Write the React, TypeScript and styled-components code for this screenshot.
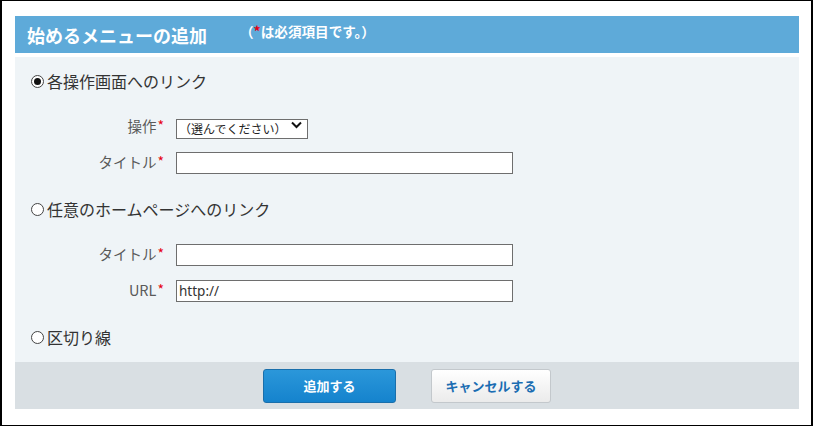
import styled, { createGlobalStyle, css } from "styled-components";

const GlobalStyle = createGlobalStyle`
  html, body {
    margin: 0px;
    padding: 0px;
    background: #ffffff;
  }
  body {
    font-family: "Noto Sans CJK JP", "Noto Sans", sans-serif;
    color: #333333;
  }
`;

const Frame = styled.div`${() => css`
  width: 813px;
  height: 426px;
  box-sizing: border-box;
  border-style: solid;
  border-color: #000000;
  border-width: 1px 2px 1px 2px;
  padding: 15px 12px 0px 13px;
  background: #ffffff;
`}`;

const Panel = styled.div`${() => css`
  display: flex;
  flex-direction: column;
  width: 784px;
`}`;

const Header = styled.div`${() => css`
  display: flex;
  flex-direction: row;
  align-items: center;
  height: 37px;
  padding-left: 12px;
  background: #5eaad9;
  color: #ffffff;
  margin-bottom: 4px;
`}`;

const Title = styled.h1`${() => css`
  margin: 0px;
  font-size: 18px;
  font-weight: 700;
  line-height: 20px;
`}`;

const Note = styled.span`${() => css`
  margin-left: 33px;
  margin-bottom: 8px;
  font-size: 13.6px;
  font-weight: 700;
  line-height: 14px;

  ${() => Required} {
    font-size: 14px;
  }
`}`;

const Required = styled.span`${() => css`
  color: #e60012;
  font-weight: 700;
`}`;

const Body = styled.div`${() => css`
  display: flex;
  flex-direction: column;
  gap: 18px;
  padding: 12px 16px 13px 16px;
  background: #eff4f7;
`}`;

const Section = styled.div`${() => css`
  display: flex;
  flex-direction: column;
  gap: 14px;
`}`;

const RadioRow = styled.label`${() => css`
  display: flex;
  flex-direction: row;
  align-items: center;
  gap: 3px;
  height: 24px;
  font-size: 16px;
  line-height: 24px;
  color: #333333;
`}`;

const RadioMark = styled.span<{ $checked?: boolean }>`${({ $checked }) => css`
  display: inline-flex;
  align-items: center;
  justify-content: center;
  width: 11px;
  height: 11px;
  border: 1px solid #444444;
  border-radius: 50%;
  background: #ffffff;

  &::after {
    content: "";
    display: ${$checked ? "block" : "none"};
    width: 7px;
    height: 7px;
    border-radius: 50%;
    background: #111111;
  }
`}`;

const FormGrid = styled.div`${() => css`
  display: grid;
  grid-template-columns: 133px 1fr;
  column-gap: 12px;
  grid-auto-rows: 36px;
  align-items: center;
`}`;

const FieldLabel = styled.span`${() => css`
  justify-self: end;
  font-size: 14.5px;
  line-height: 18px;
  color: #5a5a5a;

  ${() => Required} {
    font-size: 14px;
    font-weight: 400;
    margin-left: 1px;
    vertical-align: 1px;
  }
`}`;

const SelectWrap = styled.div`${() => css`
  position: relative;
  width: 132px;
  height: 20px;
`}`;

const Select = styled.select`${() => css`
  appearance: none;
  width: 100%;
  height: 100%;
  box-sizing: border-box;
  margin: 0px;
  padding: 0px 20px 0px 2px;
  border: 1px solid #6e6e6e;
  border-radius: 0px;
  background: #ffffff;
  font-family: "Noto Sans CJK JP", sans-serif;
  font-size: 12px;
  color: #222222;
`}`;

const Chevron = styled.svg`${() => css`
  position: absolute;
  right: 6px;
  top: 6px;
  pointer-events: none;
`}`;

const TextInput = styled.input`${() => css`
  width: 337px;
  height: 22px;
  box-sizing: border-box;
  margin: 0px;
  padding: 0px 2px;
  border: 1px solid #6e6e6e;
  border-radius: 0px;
  background: #ffffff;
  font-family: "Noto Sans", "Noto Sans CJK JP", sans-serif;
  font-size: 13.5px;
  color: #333333;
  outline: none;
`}`;

const Footer = styled.div`${() => css`
  display: flex;
  flex-direction: row;
  justify-content: center;
  align-items: center;
  gap: 35px;
  height: 47px;
  background: #d9dfe3;
`}`;

const ActionButton = styled.button<{ $primary?: boolean }>`${({ $primary }) => css`
  height: 34px;
  width: ${$primary ? "133px" : "120px"};
  box-sizing: border-box;
  margin: 0px;
  border-radius: 3px;
  font-family: "Noto Sans CJK JP", sans-serif;
  font-size: 13px;
  font-weight: 700;
  cursor: pointer;
  ${$primary
    ? css`
        border: 1px solid #1a6fab;
        background: linear-gradient(#2b97da, #1583cd);
        color: #ffffff;
      `
    : css`
        border: 1px solid #c3c8cc;
        background: linear-gradient(#ffffff, #ebebeb);
        color: #1b6db2;
      `}
`}`;

function Field({ label, children }: { label: string; children: React.ReactNode }) {
  return (
    <>
      <FieldLabel>
        {label}
        <Required>*</Required>
      </FieldLabel>
      <div>{children}</div>
    </>
  );
}

export default function App() {
  return (
    <>
      <GlobalStyle />
      <Frame>
        <Panel>
          <Header>
            <Title>始めるメニューの追加</Title>
            <Note>
              （<Required>*</Required>は必須項目です。）
            </Note>
          </Header>
          <Body>
            <Section>
              <RadioRow>
                <RadioMark $checked />
                各操作画面へのリンク
              </RadioRow>
              <FormGrid>
                <Field label="操作">
                  <SelectWrap>
                    <Select defaultValue="">
                      <option value="">（選んでください）</option>
                    </Select>
                    <Chevron width="11" height="8" viewBox="0 0 11 8">
                      <path d="M1 1.5 L5.5 6 L10 1.5" fill="none" stroke="#111111" strokeWidth="2" />
                    </Chevron>
                  </SelectWrap>
                </Field>
                <Field label="タイトル">
                  <TextInput type="text" defaultValue="" />
                </Field>
              </FormGrid>
            </Section>
            <Section>
              <RadioRow>
                <RadioMark />
                任意のホームページへのリンク
              </RadioRow>
              <FormGrid>
                <Field label="タイトル">
                  <TextInput type="text" defaultValue="" />
                </Field>
                <Field label="URL">
                  <TextInput type="text" defaultValue="http://" />
                </Field>
              </FormGrid>
            </Section>
            <RadioRow>
              <RadioMark />
              区切り線
            </RadioRow>
          </Body>
          <Footer>
            <ActionButton $primary>追加する</ActionButton>
            <ActionButton>キャンセルする</ActionButton>
          </Footer>
        </Panel>
      </Frame>
    </>
  );
}
